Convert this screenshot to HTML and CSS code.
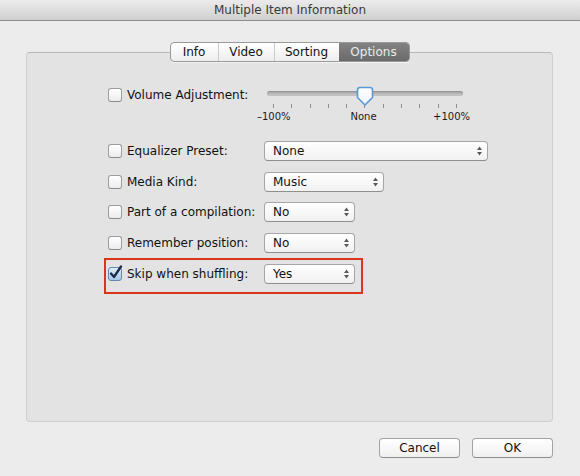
FILE: index.html
```html
<!DOCTYPE html>
<html>
<head>
<meta charset="utf-8">
<title>Multiple Item Information</title>
<link rel="stylesheet" href="styles.css">
</head>
<body>
<div class="window">
  <header class="titlebar">Multiple Item Information</header>
  <main class="content">
    <nav class="tabs">
      <span class="tab">Info</span>
      <span class="tab">Video</span>
      <span class="tab">Sorting</span>
      <span class="tab tab-active">Options</span>
    </nav>
    <section class="panel">
      <div class="row row-volume">
        <div class="field"><span class="check"></span><span>Volume Adjustment:</span></div>
        <div class="slider">
          <div class="rail">
            <div class="track"></div>
            <svg class="knob" width="18" height="21" viewBox="0 0 18 21"><defs><linearGradient id="kg" x1="0" y1="0" x2="0" y2="1"><stop offset="0" stop-color="#ffffff"/><stop offset="1" stop-color="#eef3f9"/></linearGradient></defs><path d="M4 1.5 H14 Q16.5 1.5 16.5 4 V11.5 L9 19 L1.5 11.5 V4 Q1.5 1.5 4 1.5 Z" fill="url(#kg)" stroke="#5c98d8" stroke-width="1.6" stroke-linejoin="round"/></svg>
          </div>
          <div class="ticks"><i></i><i></i><i></i><i></i><i></i><i></i><i></i><i></i><i></i><i></i><i></i></div>
          <div class="scale"><span class="scale-min">–100%</span><span>None</span><span class="scale-max">+100%</span></div>
        </div>
      </div>
      <div class="row row-first">
        <div class="field"><span class="check"></span><span>Equalizer Preset:</span></div>
        <div class="popup popup-wide"><span>None</span><svg class="arrows" width="5" height="10" viewBox="0 0 5 10"><path d="M0 4 L2.5 0.5 L5 4 Z M0 6 L2.5 9.5 L5 6 Z" fill="#5a5a5a"/></svg></div>
      </div>
      <div class="row">
        <div class="field"><span class="check"></span><span>Media Kind:</span></div>
        <div class="popup popup-mid"><span>Music</span><svg class="arrows" width="5" height="10" viewBox="0 0 5 10"><path d="M0 4 L2.5 0.5 L5 4 Z M0 6 L2.5 9.5 L5 6 Z" fill="#5a5a5a"/></svg></div>
      </div>
      <div class="row">
        <div class="field"><span class="check"></span><span>Part of a compilation:</span></div>
        <div class="popup popup-small"><span>No</span><svg class="arrows" width="5" height="10" viewBox="0 0 5 10"><path d="M0 4 L2.5 0.5 L5 4 Z M0 6 L2.5 9.5 L5 6 Z" fill="#5a5a5a"/></svg></div>
      </div>
      <div class="row">
        <div class="field"><span class="check"></span><span>Remember position:</span></div>
        <div class="popup popup-small"><span>No</span><svg class="arrows" width="5" height="10" viewBox="0 0 5 10"><path d="M0 4 L2.5 0.5 L5 4 Z M0 6 L2.5 9.5 L5 6 Z" fill="#5a5a5a"/></svg></div>
      </div>
      <div class="highlight">
        <div class="row">
          <div class="field"><span class="check check-on"><svg class="checkmark" width="15" height="15" viewBox="0 0 15 15"><path d="M3 8.5 L6 12 L13 1.5" fill="none" stroke="#1b2b48" stroke-width="2.3" stroke-linecap="round" stroke-linejoin="round"/></svg></span><span>Skip when shuffling:</span></div>
          <div class="popup popup-small"><span>Yes</span><svg class="arrows" width="5" height="10" viewBox="0 0 5 10"><path d="M0 4 L2.5 0.5 L5 4 Z M0 6 L2.5 9.5 L5 6 Z" fill="#5a5a5a"/></svg></div>
        </div>
      </div>
    </section>
    <footer class="actions">
      <button class="btn">Cancel</button>
      <button class="btn">OK</button>
    </footer>
  </main>
</div>
</body>
</html>
```
FILE: styles.css
```css
html, body {
  margin: 0;
  padding: 0;
}
body {
  background: #ececec;
  font-family: "DejaVu Sans", "Noto Sans", sans-serif;
  font-size: 12px;
  color: #111111;
}
.window {
  width: 580px;
  height: 476px;
  overflow: hidden;
  display: flex;
  flex-direction: column;
  background: #ececec;
}
.titlebar {
  height: 20px;
  line-height: 20px;
  text-align: center;
  color: #3a3a3a;
  background: linear-gradient(#ebebeb, #d0d0d0);
  border-bottom: 1px solid #8d8d8d;
}
.content {
  padding: 21px 27px 0 26px;
}
.tabs {
  position: relative;
  z-index: 1;
  display: grid;
  grid-template-columns: 47px 56px 65px 70px;
  width: max-content;
  height: 20px;
  box-sizing: border-box;
  margin: 0 auto -10px;
  border: 1px solid #999999;
  border-radius: 4px;
  overflow: hidden;
  background: linear-gradient(#ffffff, #eeeeee);
  box-shadow: 0 1px 0 rgba(255,255,255,0.6);
}
.tab {
  text-align: center;
  line-height: 18px;
  color: #111111;
  border-left: 1px solid #cccccc;
}
.tab:first-child {
  border-left: none;
}
.tab-active {
  border-left: none;
  color: #ebebeb;
  background: linear-gradient(#838383, #6a6a6a);
}
.panel {
  height: 370px;
  box-sizing: border-box;
  padding: 32px 0 0 81px;
  background: #e3e3e3;
  border: 1px solid #cfcfcf;
  border-top-color: #b8b8b8;
  border-radius: 4px;
}
.row {
  display: flex;
  align-items: center;
  height: 20px;
}
.row + .row {
  margin-top: 10.5px;
}
.row-volume {
  align-items: flex-start;
  height: auto;
}
.row-volume + .row-first {
  margin-top: 18px;
}
.field {
  display: flex;
  align-items: center;
  gap: 5px;
  width: 156px;
  height: 20px;
  flex: none;
  color: #111111;
}
.check {
  position: relative;
  width: 14px;
  height: 14px;
  box-sizing: border-box;
  flex: none;
  border: 1px solid #9d9d9d;
  border-bottom-color: #8a8a8a;
  border-radius: 3px;
  background: linear-gradient(#ffffff, #ececec);
}
.check-on {
  border-color: #6586ad;
  background: linear-gradient(#e0ecf8, #a9c9ea);
}
.checkmark {
  position: absolute;
  left: -1px;
  top: -3px;
}
.slider {
  width: 196px;
  margin-left: 3px;
  flex: none;
}
.rail {
  position: relative;
  height: 19px;
  box-sizing: border-box;
  padding-top: 6px;
}
.track {
  height: 5px;
  border-radius: 3px;
  background: linear-gradient(#9a9a9a, #d2d2d2);
  box-shadow: inset 0 0 0 1px rgba(0,0,0,0.06);
}
.knob {
  position: absolute;
  left: 89px;
  top: 1px;
}
.ticks {
  display: flex;
  justify-content: space-between;
  height: 4px;
  padding: 0 6px;
}
.ticks i {
  width: 1px;
  background: #8e8e8e;
}
.scale {
  display: grid;
  grid-template-columns: 1fr auto 1fr;
  margin: 3px -7px 0 -10px;
  font-size: 10px;
  line-height: 12px;
  color: #1a1a1a;
}
.scale-min {
  justify-self: start;
}
.scale-max {
  justify-self: end;
}
.popup {
  display: flex;
  align-items: center;
  justify-content: space-between;
  height: 20px;
  box-sizing: border-box;
  padding: 0 5px 0 8px;
  border: 1px solid #a6a6a6;
  border-bottom-color: #8f8f8f;
  border-radius: 4px;
  background: linear-gradient(#ffffff, #f1f1f1);
  color: #111111;
}
.popup-wide {
  width: 224px;
}
.popup-mid {
  width: 120px;
}
.popup-small {
  width: 91px;
}
.highlight {
  width: 259px;
  box-sizing: border-box;
  margin: 5px 0 0 -4px;
  padding: 4px 0 8px 2px;
  border: 2px solid #d9361f;
}
.actions {
  display: flex;
  justify-content: flex-end;
  gap: 12px;
  margin-top: 16px;
}
.btn {
  width: 81px;
  height: 20px;
  padding: 0;
  font-family: inherit;
  font-size: 12px;
  color: #111111;
  border: 1px solid #a3a3a3;
  border-bottom-color: #8c8c8c;
  border-radius: 4px;
  background: linear-gradient(#ffffff, #f0f0f0);
}
```
